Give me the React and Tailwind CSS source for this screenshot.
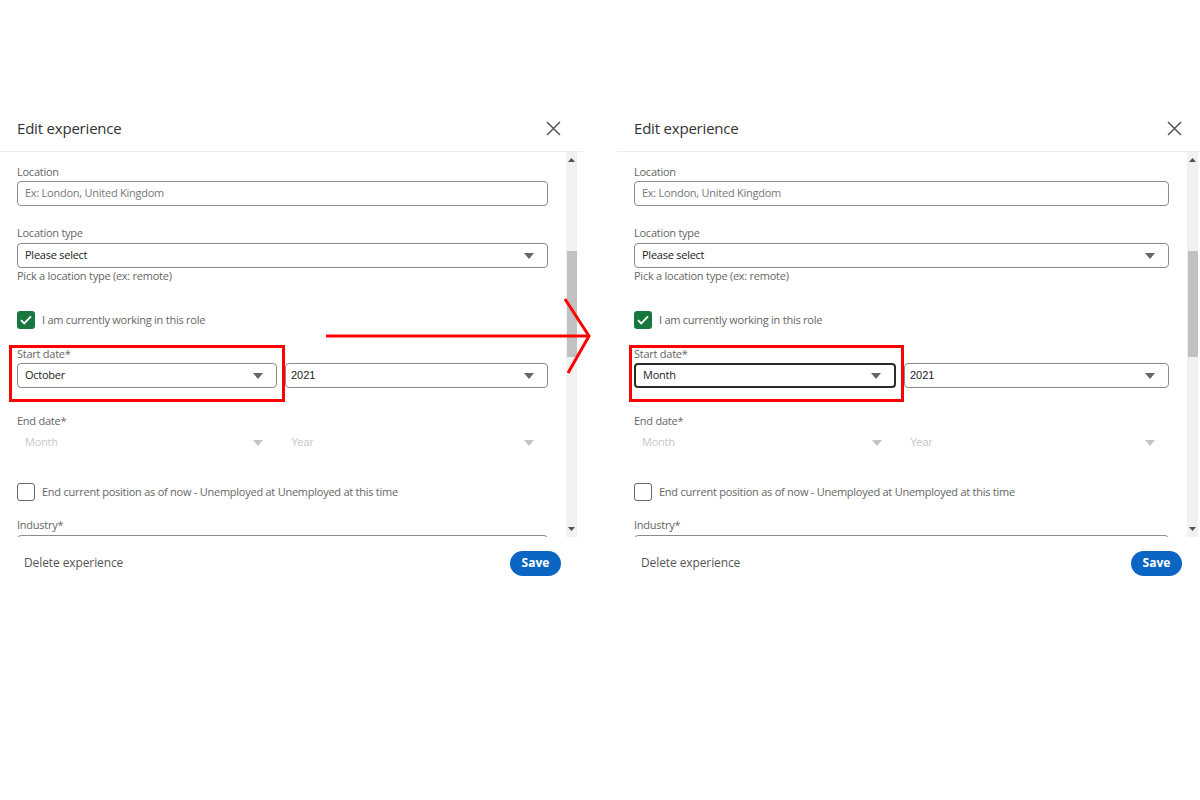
import React from 'react'

const sans = { fontFamily: '"Open Sans", "Noto Sans", sans-serif' }

const Caret = ({ light }) => (
  <svg width="10" height="6" viewBox="0 0 10 6" className="shrink-0">
    <path d="M0 0h10L5 6z" fill={light ? '#c4c4c4' : '#666'} />
  </svg>
)

const Select = ({ value, focused, disabled, arial, className }) => (
  <div
    className={
      'flex h-[25px] items-center justify-between rounded-[4px] pr-[13px] ' +
      (arial ? 'pl-[5px] ' : 'pl-[7px] ') +
      (focused
        ? 'border-2 border-[#2b2b2b] pl-[6px] pr-[12px]'
        : disabled
        ? 'border border-transparent'
        : 'border border-[#8c8c8c]') +
      ' ' + (className || '')
    }
  >
    <span
      className={'text-[11px] tracking-[-0.25px] ' + (disabled ? 'text-[#c8c8c8]' : 'text-[#222]')}
      style={arial ? { fontFamily: '"Liberation Sans", Arial, sans-serif', letterSpacing: 0 } : undefined}
    >
      {value}
    </span>
    <Caret light={disabled} />
  </div>
)

const Label = ({ children, className }) => (
  <p className={'text-[11px] leading-[16px] tracking-[-0.25px] text-[#666] ' + (className || '')}>{children}</p>
)

const Checkbox = ({ checked }) =>
  checked ? (
    <div className='flex h-[18px] w-[18px] items-center justify-center rounded-[3px] bg-[#18773f]'>
      <svg width="12" height="10" viewBox="0 0 12 10">
        <path d="M1 5.2l3.2 3.2L11 1.4" fill="none" stroke="#fff" strokeWidth="1.8" />
      </svg>
    </div>
  ) : (
    <div className='h-[18px] w-[18px] rounded-[3px] border border-[#666]' />
  )

const Panel = ({ month, focused, wide }) => {
  const monthWidth = wide ? 'w-[262px] shrink-0' : 'w-[260px] shrink-0'
  return (
    <div className={(wide ? 'w-[587px] ' : 'w-[583px] ') + 'shrink-0 bg-white'} style={sans}>
      <div className='flex h-[46px] items-center justify-between border-b border-[#ececec] pl-[17px] pr-[22px]'>
        <h2 className='text-[15px] tracking-[-0.2px] text-[#333]'>Edit experience</h2>
        <svg width="15" height="15" viewBox="0 0 15 15">
          <path d="M1 1l13 13M14 1L1 14" stroke="#555" strokeWidth="1.5" />
        </svg>
      </div>
      <div className='flex h-[385px] pr-[6px]'>
        <div className='flex-1 overflow-hidden pl-[17px] pr-[18px] pt-[12px]'>
          <Label>Location</Label>
          <div className='mt-[1px] flex h-[25px] items-center rounded-[4px] border border-[#8c8c8c] px-[7px]'>
            <span className='text-[11px] tracking-[-0.25px] text-[#777]'>Ex: London, United Kingdom</span>
          </div>

          <Label className='mt-[19px]'>Location type</Label>
          <Select value="Please select" className='mt-[2px]' />
          <p className='text-[11px] leading-[15px] tracking-[-0.25px] text-[#666]'>Pick a location type (ex: remote)</p>

          <div className='mt-[28px] flex items-center gap-[7px]'>
            <Checkbox checked />
            <span className='text-[11px] tracking-[-0.25px] text-[#666]'>I am currently working in this role</span>
          </div>

          <Label className='mt-[17px]'>Start date*</Label>
          <div className='mt-[1px] flex gap-[8px]'>
            <Select value={month} focused={focused} className={monthWidth} />
            <Select value="2021" arial className='flex-1' />
          </div>

          <Label className='mt-[25px]'>End date*</Label>
          <div className='mt-[1px] flex gap-[8px]'>
            <Select value="Month" disabled className={monthWidth} />
            <Select value="Year" disabled arial className='flex-1' />
          </div>

          <div className='mt-[28px] flex items-center gap-[7px]'>
            <Checkbox />
            <span className='text-[11px] tracking-[-0.25px] text-[#666]'>
              End current position as of now - Unemployed at Unemployed at this time
            </span>
          </div>

          <Label className='mt-[16px]'>Industry*</Label>
          <div className='mt-[2px] h-[25px] rounded-[4px] border border-[#8c8c8c]' />
        </div>
        <div className='flex w-[11px] flex-col items-center justify-between bg-[#f1f1f1] py-[6px]'>
          <svg width="7" height="4" viewBox="0 0 7 4"><path d="M0 4h7L3.5 0z" fill="#505050" /></svg>
          <div className='mb-auto mt-[89px] h-[106px] w-[10px] bg-[#c1c1c1]' />
          <svg width="7" height="4" viewBox="0 0 7 4"><path d="M0 0h7L3.5 4z" fill="#505050" /></svg>
        </div>
      </div>
      <div className='flex h-[48px] items-center justify-between pl-[24px] pr-[22px] pt-[4px]'>
        <span className='text-[12px] font-medium tracking-[-0.1px] text-[#555]'>Delete experience</span>
        <button className='h-[25px] w-[51px] rounded-full bg-[#0a66c2] text-[12px] font-bold text-white'>
          Save
        </button>
      </div>
    </div>
  )
}

const App = () => {
  return (
    <div className='relative h-[800px] w-[1200px] overflow-hidden bg-white'>
      <div className='flex gap-[34px] pt-[106px]'>
        <Panel month="October" />
        <Panel month="Month" focused wide />
      </div>
      <svg className='pointer-events-none absolute left-0 top-0' width="1200" height="800">
        <rect x="10.5" y="346.5" width="273" height="54" fill="none" stroke="#ff0000" strokeWidth="3" />
        <rect x="630.5" y="346.5" width="272" height="54" fill="none" stroke="#ff0000" strokeWidth="3" />
        <path d="M326 336H589" stroke="#ff0000" strokeWidth="3" />
        <path d="M565 299L589 336L568 373" fill="none" stroke="#ff0000" strokeWidth="3" />
      </svg>
    </div>
  )
}

export default App
